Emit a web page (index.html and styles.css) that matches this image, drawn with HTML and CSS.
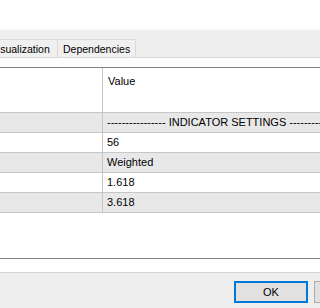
FILE: index.html
```html
<!DOCTYPE html>
<html>
<head>
<meta charset="utf-8">
<link rel="stylesheet" href="styles.css">
</head>
<body>
<div class="page">
  <div class="top"></div>
  <div class="tabband">
    <div class="tabs">
      <div class="tab first">Visualization</div>
      <div class="tab">Dependencies</div>
    </div>
  </div>
  <div class="gap"></div>
  <div class="grid">
    <div class="row head">
      <div class="c1"></div>
      <div class="c2">Value</div>
    </div>
    <div class="row alt">
      <div class="c1"></div>
      <div class="c2">---------------- INDICATOR SETTINGS --------------------</div>
    </div>
    <div class="row">
      <div class="c1"></div>
      <div class="c2">56</div>
    </div>
    <div class="row alt">
      <div class="c1"></div>
      <div class="c2">Weighted</div>
    </div>
    <div class="row">
      <div class="c1"></div>
      <div class="c2">1.618</div>
    </div>
    <div class="row alt">
      <div class="c1"></div>
      <div class="c2">3.618</div>
    </div>
  </div>
  <div class="gap2"></div>
  <div class="footer">
    <button class="btn default">OK</button>
    <button class="btn">Cancel</button>
  </div>
</div>
</body>
</html>
```
FILE: styles.css
```css
html, body {
  margin: 0;
  padding: 0;
  background: #ffffff;
}
.page {
  width: 320px;
  height: 308px;
  overflow: hidden;
  font-family: "Liberation Sans", Arial, sans-serif;
  font-size: 11px;
  color: #000;
  display: flex;
  flex-direction: column;
}
.top {
  height: 30px;
  flex: none;
  background: linear-gradient(#ffffff 80%, #fbfbfb);
}
.tabband {
  height: 27px;
  flex: none;
  background: #eeeeee;
  border-bottom: 1px solid #d9d9d9;
  display: flex;
  align-items: flex-end;
  overflow: hidden;
}
.tabs {
  display: flex;
  margin-left: -15px;
}
.tab {
  height: 18px;
  box-sizing: border-box;
  padding: 3px 5px 0 5px;
  font-size: 10.5px;
  line-height: 13px;
  background: #f0f0f0;
  border: 1px solid #d9d9d9;
  border-bottom: none;
  white-space: nowrap;
}
.tab + .tab {
  border-left: none;
}
.tab.first {
  width: 73px;
}
.gap {
  height: 9px;
  flex: none;
  background: #fdfdfd;
}
.grid {
  height: 190px;
  flex: none;
  border-top: 1px solid #828282;
  border-bottom: 1px solid #828282;
  background: #ffffff;
}
.row {
  display: flex;
  height: 19px;
  border-bottom: 1px solid #c6c6c6;
  background: #ffffff;
}
.row.alt {
  background: #e8e8e8;
}
.row.head {
  height: 44px;
}
.c1 {
  width: 102px;
  flex: none;
  border-right: 1px solid #c6c6c6;
}
.c2 {
  flex: 1;
  padding-left: 4px;
  line-height: 19px;
  white-space: nowrap;
  overflow: hidden;
}
.row.head .c2 {
  padding-left: 5px;
  padding-top: 6px;
  line-height: 14px;
}
.gap2 {
  height: 13px;
  flex: none;
  border-bottom: 1px solid #d4d4d4;
}
.footer {
  flex: 1;
  background: #eeeeee;
  display: flex;
  align-items: flex-start;
  gap: 6px;
  padding: 8px 0 0 234px;
}
.btn {
  flex: none;
  width: 74px;
  height: 22px;
  box-sizing: border-box;
  background: #e1e1e1;
  border: 1px solid #adadad;
  font-family: "Liberation Sans", Arial, sans-serif;
  font-size: 11px;
  color: #000;
  padding: 0;
  margin: 0;
}
.btn.default {
  border: 2px solid #0078d7;
}
```
